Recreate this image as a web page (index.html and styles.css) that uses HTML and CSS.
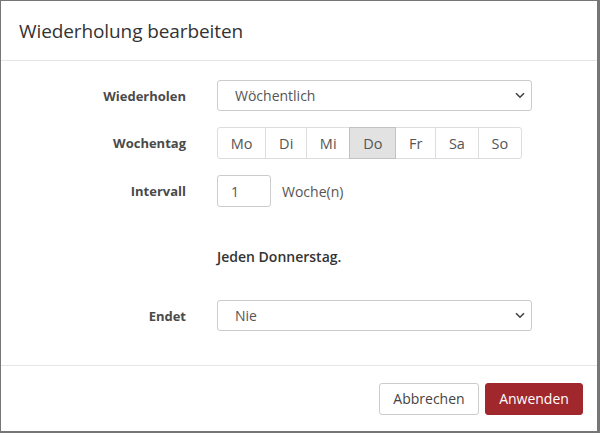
FILE: index.html
```html
<!DOCTYPE html>
<html lang="de">
<head>
<meta charset="utf-8">
<title>Wiederholung bearbeiten</title>
<link rel="stylesheet" href="styles.css">
</head>
<body>
<div class="modal">
  <div class="modal-header">
    <h4 class="modal-title">Wiederholung bearbeiten</h4>
  </div>
  <div class="modal-body">
    <div class="form-row">
      <label class="form-label">Wiederholen</label>
      <div class="select wide">
        <span>Wöchentlich</span>
        <svg class="chev" width="10" height="7" viewBox="0 0 10 7"><path d="M1 1.2 L5 5.2 L9 1.2" fill="none" stroke="#444" stroke-width="1.6"/></svg>
      </div>
    </div>
    <div class="form-row">
      <label class="form-label">Wochentag</label>
      <div class="btn-group">
        <span class="day">Mo</span><span class="day">Di</span><span class="day">Mi</span><span class="day active">Do</span><span class="day">Fr</span><span class="day">Sa</span><span class="day">So</span>
      </div>
    </div>
    <div class="form-row">
      <label class="form-label">Intervall</label>
      <div class="interval">
        <div class="input">1</div>
        <span class="unit">Woche(n)</span>
      </div>
    </div>
    <div class="summary-row">
      <p class="summary">Jeden Donnerstag.</p>
    </div>
    <div class="form-row">
      <label class="form-label">Endet</label>
      <div class="select wide">
        <span>Nie</span>
        <svg class="chev" width="10" height="7" viewBox="0 0 10 7"><path d="M1 1.2 L5 5.2 L9 1.2" fill="none" stroke="#444" stroke-width="1.6"/></svg>
      </div>
    </div>
  </div>
  <div class="modal-footer">
    <button class="btn btn-default">Abbrechen</button>
    <button class="btn btn-primary">Anwenden</button>
  </div>
</div>
</body>
</html>
```
FILE: styles.css
```css
* { box-sizing: border-box; }
html, body { margin: 0; padding: 0; }
body {
  background: #767676;
  width: 600px;
  height: 433px;
  overflow: hidden;
  font-family: "Open Sans", "Noto Sans", sans-serif;
  color: #333;
  padding: 1px 3px 2px 1px;
}
.modal {
  background: #fff;
  width: 596px;
  height: 430px;
  display: flex;
  flex-direction: column;
}
.modal-header {
  height: 60px;
  border-bottom: 1px solid #e5e5e5;
  display: flex;
  align-items: center;
  padding: 0 18px;
}
.modal-title {
  margin: 0;
  font-size: 19px;
  font-weight: 400;
  color: #333;
  letter-spacing: -0.1px;
}
.modal-body {
  flex: 1;
  padding: 19px 0 0 0;
  display: flex;
  flex-direction: column;
}
.form-row {
  display: grid;
  grid-template-columns: 185px 315px;
  column-gap: 31px;
  align-items: center;
  margin-bottom: 16px;
}
.form-label {
  text-align: right;
  font-weight: 700;
  font-size: 13px;
  color: #4a4a4a;
}
.select {
  height: 31px;
  border: 1px solid #ccc;
  border-radius: 3px;
  display: flex;
  align-items: center;
  justify-content: space-between;
  padding: 0 6px 0 17px;
  font-size: 14px;
  color: #555;
}
.chev { display: block; }
.btn-group {
  display: flex;
  height: 32px;
  width: 305px;
}
.day {
  flex: 1 1 auto;
  display: flex;
  align-items: center;
  justify-content: center;
  border: 1px solid #ddd;
  margin-left: -1px;
  font-size: 14.5px;
  color: #555;
}
.day:first-child { margin-left: 0; border-radius: 3px 0 0 3px; }
.day:last-child { border-radius: 0 3px 3px 0; }
.day.active {
  background: #e2e2e2;
  border-color: #c2c2c2;
  position: relative;
}
.interval {
  display: flex;
  align-items: center;
  gap: 11px;
}
.input {
  width: 54px;
  height: 32px;
  border: 1px solid #ccc;
  border-radius: 3px;
  display: flex;
  align-items: center;
  padding-left: 13px;
  font-size: 14px;
  color: #555;
}
.unit { font-size: 14px; color: #555; }
.summary-row {
  padding-left: 216px;
  padding-top: 5px;
  height: 93px;
  display: flex;
  align-items: center;
  margin-top: -16px;
}
.summary {
  margin: 0;
  font-size: 14px;
  font-weight: 600;
  color: #333;
}
.modal-footer {
  height: 66px;
  border-top: 1px solid #e5e5e5;
  display: flex;
  justify-content: flex-end;
  align-items: center;
  gap: 6px;
  padding: 0 14px 0 0;
}
.btn {
  height: 32px;
  border-radius: 3px;
  font-family: inherit;
  font-size: 14px;
  padding: 0 12px;
  cursor: pointer;
}
.btn-default {
  background: #fff;
  border: 1px solid #ccc;
  color: #444;
  width: 100px;
}
.btn-primary {
  background: #a0282d;
  border: 1px solid #a0282d;
  color: #fff;
  width: 98px;
}
```
